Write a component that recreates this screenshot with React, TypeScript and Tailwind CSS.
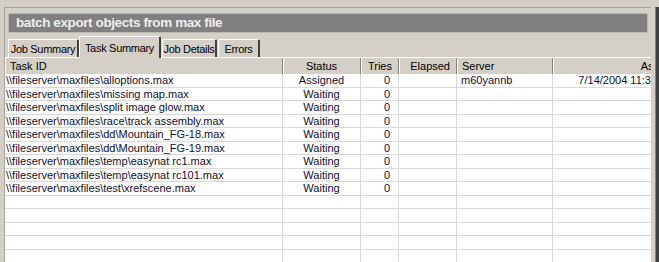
const COLS = [
  { key: "id", title: "Task ID", w: "w-[278px]", head: "text-left pl-[5px]", cell: "text-left pl-[1px]" },
  { key: "status", title: "Status", w: "w-[78px]", head: "text-center", cell: "text-center" },
  { key: "tries", title: "Tries", w: "w-[38px]", head: "text-right pr-[6px]", cell: "text-right pr-[8px]" },
  { key: "elapsed", title: "Elapsed", w: "w-[58px]", head: "text-right pr-[6px]", cell: "text-right pr-[6px]" },
  { key: "server", title: "Server", w: "w-[96px]", head: "text-left pl-[5px]", cell: "text-left pl-[4px]" },
  { key: "assigned", title: "Assigned", w: "w-[140px]", head: "text-right pr-[6px]", cell: "text-right pr-[16px]" },
] as const;

type Row = { id: string; status: string; tries: string; elapsed: string; server: string; assigned: string };

const ROWS: Row[] = [
  { id: "\\\\fileserver\\maxfiles\\alloptions.max", status: "Assigned", tries: "0", elapsed: "", server: "m60yannb", assigned: "7/14/2004 11:34 AM" },
  { id: "\\\\fileserver\\maxfiles\\missing map.max", status: "Waiting", tries: "0", elapsed: "", server: "", assigned: "" },
  { id: "\\\\fileserver\\maxfiles\\split image glow.max", status: "Waiting", tries: "0", elapsed: "", server: "", assigned: "" },
  { id: "\\\\fileserver\\maxfiles\\race\\track assembly.max", status: "Waiting", tries: "0", elapsed: "", server: "", assigned: "" },
  { id: "\\\\fileserver\\maxfiles\\dd\\Mountain_FG-18.max", status: "Waiting", tries: "0", elapsed: "", server: "", assigned: "" },
  { id: "\\\\fileserver\\maxfiles\\dd\\Mountain_FG-19.max", status: "Waiting", tries: "0", elapsed: "", server: "", assigned: "" },
  { id: "\\\\fileserver\\maxfiles\\temp\\easynat rc1.max", status: "Waiting", tries: "0", elapsed: "", server: "", assigned: "" },
  { id: "\\\\fileserver\\maxfiles\\temp\\easynat rc101.max", status: "Waiting", tries: "0", elapsed: "", server: "", assigned: "" },
  { id: "\\\\fileserver\\maxfiles\\test\\xrefscene.max", status: "Waiting", tries: "0", elapsed: "", server: "", assigned: "" },
];

const EMPTY: Row = { id: "", status: "", tries: "", elapsed: "", server: "", assigned: "" };
const ALL = [...ROWS, EMPTY, EMPTY, EMPTY, EMPTY, EMPTY, EMPTY];

const TABS = [
  { label: "Job Summary", w: "w-[71px]" },
  { label: "Task Summary", w: "w-[82px]" },
  { label: "Job Details", w: "w-[55px]" },
  { label: "Errors", w: "w-[42px]" },
];

export default function App() {
  return (
    <div className="flex h-[262px] w-[659px] flex-col overflow-hidden bg-[#d4d0c8] font-['Liberation_Sans',Arial,sans-serif] text-[11px] text-black">
      <div className="h-[7px] shrink-0 bg-[#d4d0c8]" />
      <div className="flex min-h-0 flex-1">
        <div className="w-[4px] shrink-0 bg-[#d4d0c8]" />
        <div className="flex min-w-0 flex-1 flex-col border-l border-t border-[#a8a49c]">
          {/* title bar */}
          <div className="mr-[3px] ml-[3px] mt-[5px] flex h-[20px] items-center border border-[#bdbab3] bg-[#808080] pl-[7px]">
            <span className="text-[13.5px] font-bold tracking-[-0.4px] text-[#eeeeee]">batch export objects from max file</span>
          </div>
          {/* tabs */}
          <div className="ml-[3px] mt-[2px] flex h-[22px] items-end">
            {TABS.map((t, i) =>
              i === 1 ? (
                <div
                  key={t.label}
                  className={`${t.w} z-10 -mb-px flex h-[22px] shrink-0 justify-center whitespace-nowrap rounded-t-[2px] border-l border-r-2 border-t border-l-white border-r-[#404040] border-t-white bg-[#d4d0c8] pt-[3px] text-[11px] tracking-[-0.3px]`}
                >
                  {t.label}
                </div>
              ) : (
                <div
                  key={t.label}
                  className={`${t.w} ${i === 0 ? "" : "ml-[1px]"} flex h-[18px] shrink-0 items-center justify-center whitespace-nowrap rounded-t-[2px] border-l border-r-2 border-t border-l-white border-r-[#404040] border-t-white pt-[1px] text-[11px] tracking-[-0.3px]`}
                >
                  {t.label}
                </div>
              )
            )}
          </div>
          {/* list */}
          <div className="min-h-0 flex-1 overflow-hidden border-t border-white bg-white">
            <div className="flex h-[16px] w-max bg-[#d4d0c8]">
              {COLS.map((c) => (
                <div
                  key={c.key}
                  className={`${c.w} ${c.head} shrink-0 truncate border-r border-r-[#808080] leading-[16px] shadow-[inset_1px_0_0_#ffffff]`}
                >
                  {c.title}
                </div>
              ))}
            </div>
            {ALL.map((r, i) => (
              <div key={i} className="flex h-[13.5px] w-max border-b border-[#d9d9d9]">
                {COLS.map((c) => (
                  <div
                    key={c.key}
                    className={`${c.w} ${c.cell} shrink-0 overflow-hidden whitespace-nowrap border-r border-[#d9d9d9] leading-[13px] text-[#101030]`}
                  >
                    {r[c.key]}
                  </div>
                ))}
              </div>
            ))}
          </div>
        </div>
        <div className="w-[4px] shrink-0 bg-[#d4d0c8]" />
        <div className="w-px shrink-0 bg-[#808080]" />
        <div className="w-[3px] shrink-0 bg-[#404040]" />
      </div>
    </div>
  );
}
